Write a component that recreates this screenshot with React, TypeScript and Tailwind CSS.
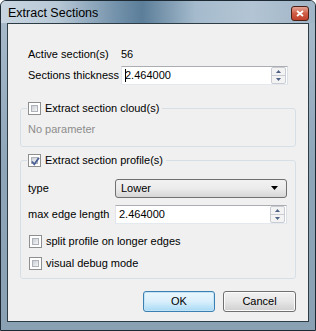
import { ReactNode } from "react";

const font = { fontFamily: '"Liberation Sans", Arial, sans-serif' };

function CheckBox({ checked }: { checked?: boolean }) {
  return (
    <div className="w-[13px] h-[13px] border border-[#8e8f8f] bg-white p-[2px] shrink-0 relative">
      <div className="w-full h-full bg-gradient-to-br from-[#cbcfd5] to-[#f6f6f6] border border-[#aeb3b9]" />
      {checked && (
        <svg
          viewBox="0 0 11 11"
          className="absolute left-px top-px w-[11px] h-[11px]"
        >
          <path
            d="M2 5.5 L4.3 8.3 L9 1.8"
            fill="none"
            stroke="#4a5f97"
            strokeWidth="1.8"
          />
        </svg>
      )}
    </div>
  );
}

function SpinBox({ value, caret }: { value: string; caret?: boolean }) {
  return (
    <div className="flex-1 h-[19px] bg-white border border-[#abadb3] border-l-[#e2e3ea] border-r-[#dbdfe6] border-b-[#e3e9ef] flex items-center">
      <div className="flex-1 pl-[3px] text-[11px] text-black flex items-center">
        {caret && <span className="w-px h-[13px] bg-black -mr-px" />}
        {value}
      </div>
      <div className="w-[15px] h-[17px] mr-px flex flex-col border border-[#c9cdd3] rounded-[2px] bg-[#f3f3f3]">
        <div className="flex-1 flex items-center justify-center border-b border-[#c9cdd3]">
          <svg viewBox="0 0 5 3" className="w-[5px] h-[3px]">
            <path d="M0 3 L2.5 0 L5 3 Z" fill="#4d6185" />
          </svg>
        </div>
        <div className="flex-1 flex items-center justify-center">
          <svg viewBox="0 0 5 3" className="w-[5px] h-[3px]">
            <path d="M0 0 L2.5 3 L5 0 Z" fill="#4d6185" />
          </svg>
        </div>
      </div>
    </div>
  );
}

function Group({
  title,
  checked,
  children,
}: {
  title: string;
  checked?: boolean;
  children: ReactNode;
}) {
  return (
    <fieldset className="border border-[#d5dfe5] rounded-[3px] p-0 m-0">
      <legend className="ml-[6px] px-[1px] flex items-center gap-[4px] h-[16px]">
        <CheckBox checked={checked} />
        <span className="text-[11px] text-black pr-[2px] whitespace-nowrap">
          {title}
        </span>
      </legend>
      {children}
    </fieldset>
  );
}

export default function App() {
  return (
    <div
      className="w-[316px] h-[331px] border border-[#1d2a33] rounded-t-[6px] bg-gradient-to-b from-[#a9bccc] via-[#8fa6b9] to-[#8aa0b3] px-[6px] pb-[8px] flex flex-col overflow-hidden whitespace-nowrap"
      style={font}
    >
      {/* title bar */}
      <div className="h-[22px] -mx-[6px] px-[7px] flex items-center justify-between bg-[linear-gradient(90deg,#c9d6e1_0%,#b7c8d6_18%,#6f8ea8_38%,#5c7e99_45%,#a5bbcd_62%,#b3c5d4_80%,#9fb4c6_100%)]">
        <span className="text-[12.5px] text-black pt-[2px]">Extract Sections</span>
        <div className="w-[18px] h-[15px] mt-[2px] mr-[-1px] rounded-[3px] border border-[#4c1e14] bg-gradient-to-b from-[#e4a497] via-[#cf5c44] to-[#c0402a] flex items-center justify-center">
          <svg viewBox="0 0 8 7" className="w-[8px] h-[7px]">
            <path d="M1 1 L7 6 M7 1 L1 6" stroke="white" strokeWidth="1.8" />
          </svg>
        </div>
      </div>

      {/* client area */}
      <div className="flex-1 border border-[#2e3c46] bg-[#f0f0f0] px-[12px] pt-[20px] text-[11px] text-black flex flex-col">
        <div className="h-[20px] flex items-center pl-[8px]">
          <span className="w-[93px]">Active section(s)</span>
          <span>56</span>
        </div>
        <div className="h-[21px] mt-[1px] flex items-center pl-[8px] pr-[8px]">
          <span className="w-[93px]">Sections thickness</span>
          <SpinBox value="2.464000" caret />
        </div>

        <div className="mt-[14px]">
          <Group title="Extract section cloud(s)">
            <div className="h-[30px] pl-[7px] pb-[4px] flex items-center text-[#8d8d8d]">
              No parameter
            </div>
          </Group>
        </div>

        <div className="mt-[5px]">
          <Group title="Extract section profile(s)" checked>
            <div className="pl-[7px] pr-[8px] pt-[10px] pb-[7px] flex flex-col">
              <div className="h-[20px] flex items-center">
                <span className="w-[87px]">type</span>
                <div className="flex-1 h-[19px] rounded-[3px] border border-[#707070] bg-gradient-to-b from-[#f2f2f2] via-[#ebebeb] to-[#d6d6d6] flex items-center justify-between pl-[5px] pr-[8px]">
                  <span>Lower</span>
                  <svg viewBox="0 0 7 4" className="w-[7px] h-[4px]">
                    <path d="M0 0 L7 0 L3.5 4 Z" fill="#000" />
                  </svg>
                </div>
              </div>
              <div className="h-[20px] mt-[6px] flex items-center">
                <span className="w-[87px]">max edge length</span>
                <SpinBox value="2.464000" />
              </div>
              <div className="h-[16px] mt-[9px] flex items-center gap-[4px] pl-[1px]">
                <CheckBox />
                <span>split profile on longer edges</span>
              </div>
              <div className="h-[16px] mt-[6px] flex items-center gap-[4px] pl-[1px]">
                <CheckBox />
                <span>visual debug mode</span>
              </div>
            </div>
          </Group>
        </div>

        <div className="mt-[12px] flex justify-end gap-[8px]">
          <button className="w-[72px] h-[21px] rounded-[3px] border border-[#3c7fb1] bg-gradient-to-b from-[#eaf6fd] via-[#d9f0fc] to-[#a7d9f5] shadow-[inset_0_0_0_1px_#c2e4f6] text-[11px]">
            OK
          </button>
          <button className="w-[73px] h-[21px] rounded-[3px] border border-[#707070] bg-gradient-to-b from-[#f2f2f2] via-[#e6e6e6] to-[#cfcfcf] shadow-[inset_0_0_0_1px_#fbfbfb] text-[11px]">
            Cancel
          </button>
        </div>
      </div>
    </div>
  );
}
